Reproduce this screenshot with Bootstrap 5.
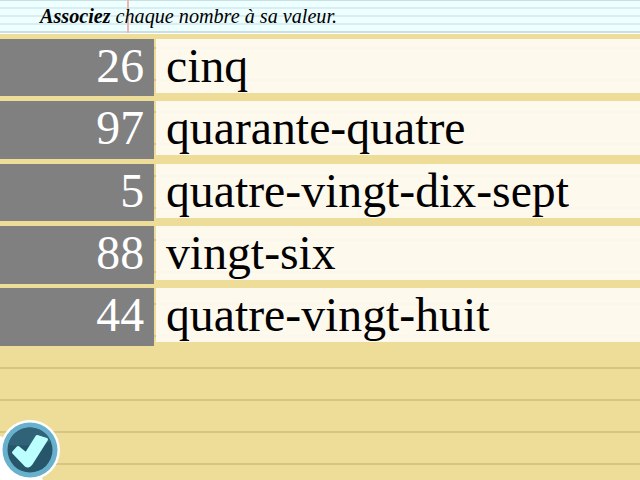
<!DOCTYPE html>
<html lang="fr">
<head>
<meta charset="utf-8">
<meta name="viewport" content="width=device-width, initial-scale=1">
<title>Associez</title>
<link href="https://cdn.jsdelivr.net/npm/bootstrap@5.3.0/dist/css/bootstrap.min.css" rel="stylesheet">
<style>
body{height:480px;font-family:"Liberation Serif",serif;color:#000;line-height:1.15;
background:#eedd99 repeating-linear-gradient(#0000 0 15px,#d6c587 15px 17px,#0000 17px 32px)}
.consigne{height:34px;padding:5px 0 0 40px;font-size:20.16px;background:
linear-gradient(#fff,#fff) 0 33px/100% 1px no-repeat,
linear-gradient(90deg,#0000 127px,#f0b4b4 127px 129px,#0000 129px),
linear-gradient(#cadfe1 0 1px,#0000 1px 31px,#cadfe1 31px 33px,#0000 33px),
repeating-linear-gradient(#eff 0 7px,#d8eef2 7px 9px,#eff 9px 15px,#d8eef2 15px 17px,#eff 17px 23px,#d8eef2 23px 25px,#eff 25px 34px)}
.paires{margin-top:4.9px;gap:4.77px}
.paire{height:57.58px;gap:2px;font-size:47.74px;line-height:53px}
.nombre{width:154px;background:#808080;padding-right:10px}
.valeur{height:54px;background:rgba(255,251,243,.93);padding-left:10px}
.valider{left:0;bottom:0}
</style>
</head>
<body class="position-relative overflow-hidden">
<header class="consigne fst-italic"><strong>Associez</strong> chaque nombre à sa valeur.</header>
<main class="paires d-flex flex-column">
<div class="paire d-flex align-items-start"><div class="nombre h-100 text-white text-end">26</div><div class="valeur flex-grow-1">cinq</div></div>
<div class="paire d-flex align-items-start"><div class="nombre h-100 text-white text-end">97</div><div class="valeur flex-grow-1">quarante-quatre</div></div>
<div class="paire d-flex align-items-start"><div class="nombre h-100 text-white text-end">5</div><div class="valeur flex-grow-1">quatre-vingt-dix-sept</div></div>
<div class="paire d-flex align-items-start"><div class="nombre h-100 text-white text-end">88</div><div class="valeur flex-grow-1">vingt-six</div></div>
<div class="paire d-flex align-items-start"><div class="nombre h-100 text-white text-end">44</div><div class="valeur flex-grow-1">quatre-vingt-huit</div></div>
</main>
<button class="valider position-absolute border-0 p-0 bg-transparent d-flex" type="button" aria-label="Valider">
<svg width="60" height="60" viewBox="0 0 60 60">
<path d="M0 16L30 30L43 60H0Z" fill="#fff"/>
<circle cx="30" cy="30" r="30" fill="#fff"/>
<circle cx="30" cy="30" r="27.5" fill="#67b1cd"/>
<circle cx="30" cy="30" r="22.500" fill="#27566b"/>
<path d="M8 25A22.500 22.500 0 0 1 51 22Q30 27 8 25Z" fill="#306377"/>
<path d="M13.500 32.500L18 27.500L26 34L37 16.500L46.500 19.500L31 44Q28.500 47.500 25.500 45Z" fill="#bff" stroke="#bff" stroke-width="3" stroke-linejoin="round"/>
</svg>
</button>
<script src="https://cdn.jsdelivr.net/npm/bootstrap@5.3.0/dist/js/bootstrap.bundle.min.js"></script>
</body>
</html>
